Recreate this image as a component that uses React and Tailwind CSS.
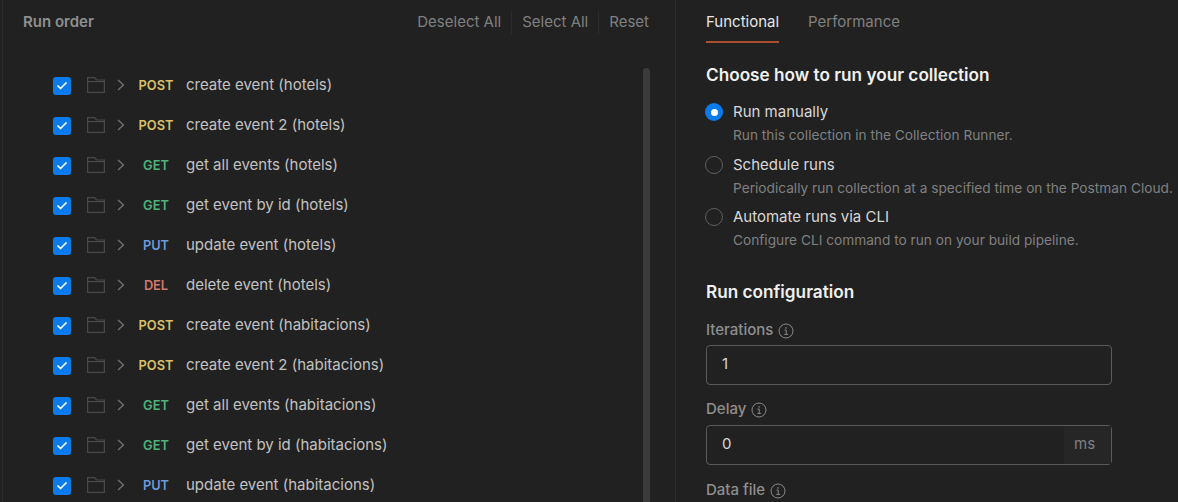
import React from "react";
import { Check } from "lucide-react";

const METHOD_COLORS = {
  POST: "text-[#d9c069]",
  GET: "text-[#4fb37c]",
  PUT: "text-[#6a9bd8]",
  DEL: "text-[#cf7a6c]",
};

const REQUESTS = [
  ["POST", "create event (hotels)"],
  ["POST", "create event 2 (hotels)"],
  ["GET", "get all events (hotels)"],
  ["GET", "get event by id (hotels)"],
  ["PUT", "update event (hotels)"],
  ["DEL", "delete event (hotels)"],
  ["POST", "create event (habitacions)"],
  ["POST", "create event 2 (habitacions)"],
  ["GET", "get all events (habitacions)"],
  ["GET", "get event by id (habitacions)"],
  ["PUT", "update event (habitacions)"],
];

const RUN_OPTIONS = [
  ["Run manually", "Run this collection in the Collection Runner.", true],
  ["Schedule runs", "Periodically run collection at a specified time on the Postman Cloud.", false],
  ["Automate runs via CLI", "Configure CLI command to run on your build pipeline.", false],
];

function FolderIcon() {
  return (
    <svg width="18" height="18" viewBox="0 0 18 18" fill="none" stroke="#4a4a4a" strokeWidth="1.2">
      <path d="M0.6 16.4V1.6H7.6L9.6 4H17.4V16.4Z" />
      <path d="M0.6 5.6H17.4" />
    </svg>
  );
}

function ChevronIcon() {
  return (
    <svg width="8" height="12" viewBox="0 0 8 12" fill="none" stroke="#757575" strokeWidth="1.2">
      <path d="M1 1L6.5 6L1 11" />
    </svg>
  );
}

function InfoIcon() {
  return (
    <svg width="16" height="16" viewBox="0 0 16 16" fill="none" stroke="#8a8a8a" strokeWidth="1">
      <circle cx="8" cy="8" r="7" />
      <path d="M6.5 7H8.2V11.4M6.4 11.4H10" />
      <path d="M8 4.2V5.4" strokeWidth="1.4" />
    </svg>
  );
}

function RequestRow({ method, name }) {
  return (
    <div className="flex h-10 items-center">
      <div className="mt-[2px] flex h-[18px] w-[18px] items-center justify-center rounded-[3px] bg-[#097bed]">
        <Check size={12} strokeWidth={3.5} className="text-white" />
      </div>
      <div className="ml-[16px]">
        <FolderIcon />
      </div>
      <div className="ml-[12px] flex">
        <ChevronIcon />
      </div>
      <div className={`ml-[10px] mt-[2px] w-[42px] text-center text-[12.8px] font-semibold ${METHOD_COLORS[method]}`}>{method}</div>
      <div className="ml-[9px] mt-[1px] text-[15px] text-[#c2c2c2]">{name}</div>
    </div>
  );
}

function RunOption({ title, desc, selected }) {
  return (
    <div className="flex h-[52.5px] items-start">
      {selected ? (
        <div className="mt-[1px] -ml-px flex h-[18px] w-[18px] items-center justify-center rounded-full bg-[#097bed]">
          <div className="h-[7px] w-[7px] rounded-full bg-white" />
        </div>
      ) : (
        <div className="mt-[1px] -ml-px h-[18px] w-[18px] rounded-full border border-[#5e5e5e]" />
      )}
      <div className="ml-[10px]">
        <div className="text-[15px] leading-[20px] text-[#d8d8d8]">{title}</div>
        <div className="mt-[4px] whitespace-nowrap text-[13.7px] leading-[18px] text-[#808080]">{desc}</div>
      </div>
    </div>
  );
}

function FieldLabel({ children }) {
  return (
    <div className="flex h-5 items-center gap-[5px] text-[15px] font-medium text-[#8f8f8f]">
      {children}
      <InfoIcon />
    </div>
  );
}

export default function App() {
  return (
    <div className="flex h-[502px] w-full overflow-hidden bg-[#212121] font-['Inter',sans-serif]">
      {/* Run order column */}
      <div className="ml-[2px] flex w-[674px] shrink-0 flex-col border-x border-[#2c2c2c]">
        <div className="flex h-[45px] shrink-0 items-center pl-5 pr-[26px]">
          <div className="text-[15px] font-semibold text-[#8f8f8f]">Run order</div>
          <div className="ml-auto flex items-center text-[15px] text-[#808080]">
            <span className="border-r border-[#2c2c2c] pr-[10px]">Deselect All</span>
            <span className="border-r border-[#2c2c2c] px-[10px]">Select All</span>
            <span className="pl-[10px]">Reset</span>
          </div>
        </div>
        <div className="flex min-h-0 flex-1">
          <div className="flex-1 pl-[50px] pt-[20px]">
            {REQUESTS.map(([method, name], i) => (
              <RequestRow key={i} method={method} name={name} />
            ))}
          </div>
          <div className="mr-[25px] mt-[23px] w-[7px] rounded-t-full bg-[#3b3b3b]" />
        </div>
      </div>

      {/* Config column */}
      <div className="min-w-0 flex-1 pl-[30px]">
        <div className="flex h-[43px] gap-[29px] text-[15px]">
          <div className="flex items-center border-b-2 border-[#a8502f] pt-[3px] text-[#e6e6e6]">Functional</div>
          <div className="flex items-center pt-[1px] text-[#808080]">Performance</div>
        </div>
        <h2 className="mt-[20px] text-[17.2px] font-semibold leading-6 text-[#f0f0f0]">Choose how to run your collection</h2>
        <div className="mt-[15px]">
          {RUN_OPTIONS.map(([title, desc, selected]) => (
            <RunOption key={title} title={title} desc={desc} selected={selected} />
          ))}
        </div>
        <h2 className="mt-[20px] text-[17.2px] font-semibold leading-6 text-[#f0f0f0]">Run configuration</h2>
        <div className="mt-[17px]">
          <FieldLabel>Iterations</FieldLabel>
          <div className="mt-[4px] flex h-10 w-[406px] items-center rounded border border-[#5a5a5a] px-[15px] text-[15px] text-[#d8d8d8]">1</div>
        </div>
        <div className="mt-[15px]">
          <FieldLabel>Delay</FieldLabel>
          <div className="mt-[5px] flex h-10 w-[406px] items-center rounded border border-[#5a5a5a] text-[15px]">
            <span className="flex-1 px-[15px] text-[#d8d8d8]">0</span>
            <span className="flex h-full w-[47px] items-center bg-[#262626] pl-[10px] text-[#808080]">ms</span>
          </div>
        </div>
        <div className="mt-[16px]">
          <FieldLabel>Data file</FieldLabel>
        </div>
      </div>
    </div>
  );
}
